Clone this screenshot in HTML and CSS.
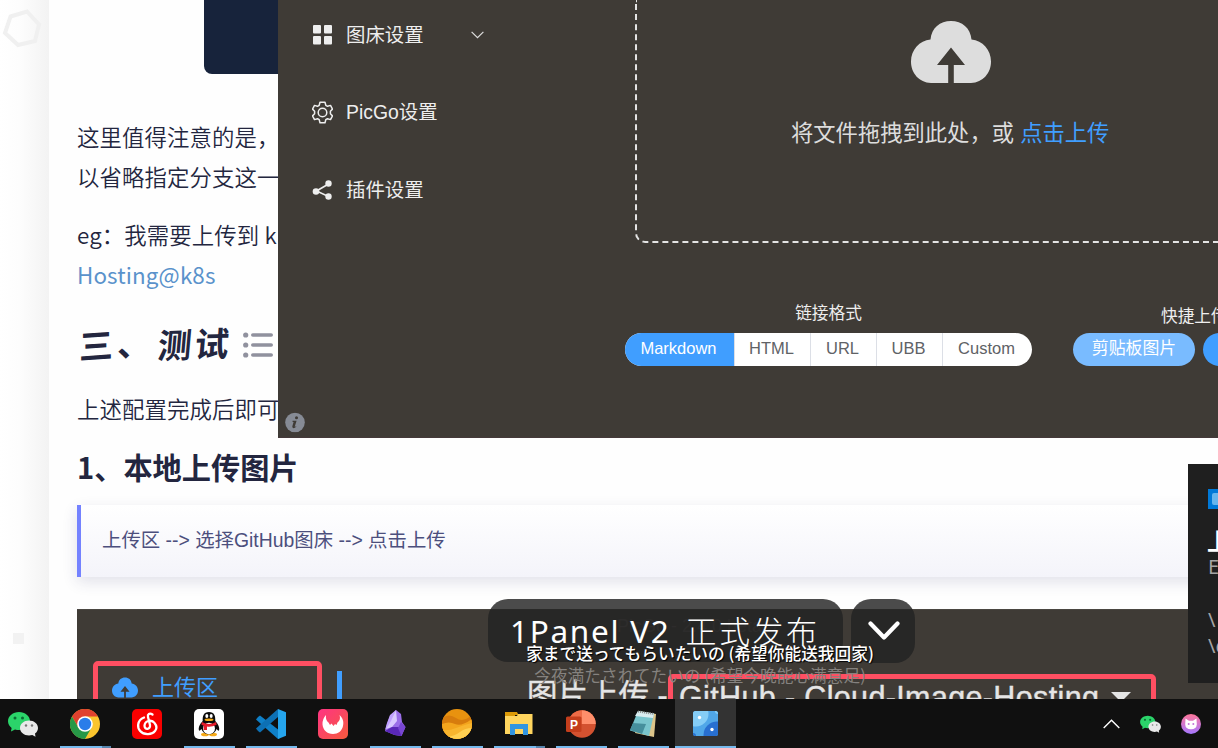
FILE: index.html
```html
<!DOCTYPE html>
<html lang="zh-CN">
<head>
<meta charset="utf-8">
<title>PicGo</title>
<link rel="stylesheet" href="styles.css">
</head>
<body>
<svg width="0" height="0" class="defs">
  <symbol id="cloud" viewBox="0 0 80 62"><path fill-rule="evenodd" d="M19.500 18.500C20.500 7 29 0 40 0s19.500 7 20.500 18.500C71.500 19.500 80 29 80 40.500 80 52 72 61.500 60 62H42.800V44H54L40 26.500 26 44H37.200V62H20C8 61.500 0 52 0 40.500 0 29 8.500 19.500 19.500 18.500Z" fill="currentColor"/></symbol>
  <symbol id="wechat" viewBox="0 0 30 26">
    <path d="M11 1C5 1 0 5 0 10.200c0 2.800 1.500 5 3.600 6.700L3 20.500l4-2c1.300.4 2.700.6 4 .6 6 0 11-4 11-9S17 1 11 1Z" fill="#2bd46a"/>
    <circle cx="7" cy="7" r="1.500" fill="#0a6b35"/><circle cx="14.500" cy="7" r="1.500" fill="#0a6b35"/>
    <path d="M21 9.500c-5 0-9 3.300-9 7.500s4 7.500 9 7.500c1.200 0 2.300-.2 3.300-.5L27.500 25.700 27 22.600c1.900-1.400 3-3.400 3-5.600 0-4.200-4-7.500-9-7.500Z" fill="#e9e9e9"/>
    <circle cx="18" cy="14.500" r="1.200" fill="#777"/><circle cx="24" cy="14.500" r="1.200" fill="#777"/>
  </symbol>
</svg>
<div class="desktop">

  <div class="page">
    <aside class="gutter">
      <svg class="hexagon" width="42" height="42" viewBox="0 0 42 42"><path d="M9.500 15.500 26 10.500 38 23.500 34 40 17 44 4 32Z" transform="translate(1 -6)" fill="none" stroke="#f0f0f0" stroke-width="4"/></svg>
      <div class="speck"></div>
    </aside>
    <main class="article">
      <div class="codeblock"></div>
      <p class="para">这里值得注意的是，<br>以省略指定分支这一</p>
      <p class="para">eg：我需要上传到 k<br><a class="link">Hosting@k8s</a></p>
      <h2 class="brush"><span class="brush-a">三、</span><span class="brush-b">测试</span>
        <svg width="31" height="26" viewBox="0 0 31 26"><g fill="#90919e"><circle cx="2.700" cy="3" r="2.600"/><circle cx="2.700" cy="13" r="2.600"/><circle cx="2.700" cy="23" r="2.600"/><rect x="8" y="1.200" width="22" height="3.600" rx="1.800"/><rect x="8" y="11.200" width="22" height="3.600" rx="1.800"/><rect x="8" y="21.200" width="22" height="3.600" rx="1.800"/></g></svg>
      </h2>
      <p class="para">上述配置完成后即可</p>
      <h3 class="subtitle">1、本地上传图片</h3>
      <blockquote class="quote">上传区 --&gt; 选择GitHub图床 --&gt; 点击上传</blockquote>
      <div class="shot">
        <div class="shot-nav"><svg width="26" height="21"><use href="#cloud"/></svg>上传区</div>
        <div class="shot-bar"></div>
        <div class="shot-main">
          <div class="shot-name">PicGo - 2.4.0.beta.9</div>
          <div class="shot-head"><span class="shot-label">图片上传 -</span><span class="shot-pick">GitHub - Cloud-Image-Hosting <i class="caret"></i></span></div>
        </div>
      </div>
    </main>
  </div>

  <section class="picgo">
    <nav class="menu">
      <div class="menu-item"><svg width="21" height="20" viewBox="0 0 21 20" fill="#eee"><rect x="1" y="0" width="8" height="8.500" rx="1"/><rect x="12" y="0" width="8" height="8.500" rx="1"/><rect x="1" y="11" width="8" height="8.500" rx="1"/><rect x="12" y="11" width="8" height="8.500" rx="1"/></svg><span>图床设置</span><svg class="chev" width="13" height="8" viewBox="0 0 13 8"><path d="M.6.8 6.500 6.700 12.400.8" fill="none" stroke="#ddd" stroke-width="1.200"/></svg></div>
      <div class="menu-item"><svg width="21" height="23" viewBox="0 0 21 23" fill="none" stroke="#eee" stroke-width="1.500" stroke-linejoin="round"><path d="M8 1.200h5l.8 3.100 1.700 1 3-.9 2 3.700-2.100 2.200v2.400l2.100 2.200-2 3.700-3-.9-1.700 1-.8 3.100H8l-.8-3.100-1.700-1-3 .9-2-3.700 2.100-2.200v-2.400L.5 8.100l2-3.700 3 .9 1.700-1Z"/><circle cx="10.500" cy="11.500" r="4.300"/></svg><span>PicGo设置</span></div>
      <div class="menu-item"><svg width="21" height="20" viewBox="0 0 21 20"><path d="M16.500 4 4.500 11l12 5.500" fill="none" stroke="#eee" stroke-width="1.600"/><g fill="#eee"><circle cx="16.500" cy="3.500" r="3.200"/><circle cx="4" cy="11.500" r="3.300"/><circle cx="16.500" cy="16.500" r="3.200"/></g></svg><span>插件设置</span></div>
      <svg class="info" width="20" height="20" viewBox="0 0 20 20"><circle cx="10" cy="10" r="9.800" fill="#868b95"/><circle cx="11.500" cy="5.300" r="1.500" fill="#3f3b36"/><path d="M7.600 8.300h4L9.700 14.200q.7.200 2-.9-1.300 2.600-3.500 2.300-1.400-.4-.8-2.100l1.200-4-1.200-.3Z" fill="#3f3b36"/></svg>
    </nav>
    <div class="upload">
      <div class="drop">
        <svg class="drop-cloud" width="80" height="62"><use href="#cloud"/></svg>
        <div class="drop-text">将文件拖拽到此处，或 <em>点击上传</em></div>
      </div>
      <div class="controls">
        <div class="format">
          <div class="label">链接格式</div>
          <div class="group"><b class="b1 on">Markdown</b><b class="b2">HTML</b><b class="b3">URL</b><b class="b3">UBB</b><b class="b4">Custom</b></div>
        </div>
        <div class="quick">
          <div class="label quick-label">快捷上传</div>
          <div class="quick-row"><b class="clip">剪贴板图片</b><b class="urlbtn"></b></div>
        </div>
      </div>
    </div>
  </section>

  <div class="banner"><div class="banner-text">1Panel V2 <span class="banner-cjk">正式发布</span></div><div class="banner-btn"><svg width="32" height="20" viewBox="0 0 32 20"><path d="M2.500 2.500 16 16.500 29.500 2.500" fill="none" stroke="#fff" stroke-width="4.200" stroke-linecap="round" stroke-linejoin="round"/></svg></div></div>
  <div class="lyrics"><div class="now">家まで送ってもらいたいの (希望你能送我回家)</div><div class="next">今夜満たされてたいの (希望今晚能心满意足)</div></div>

  <div class="toast"><div class="toast-icon"><i></i></div><strong>上传成功</strong><p class="toast-line">E</p><p class="toast-path">\<br>\c</p></div>

  <footer class="taskbar">
    <div class="app"><svg width="30" height="26"><use href="#wechat"/></svg></div>
    <div class="app run more"><svg width="30" height="30" viewBox="-15 -15 30 30"><circle r="15" fill="#fbc52d"/><path d="M0-7.500H13A15 15 0 0 0-13-7.500L-6.500 3.700Z" fill="#e0412f"/><path d="M-13-7.500A15 15 0 0 0 0 15L6.500 3.700-6.500 3.700Z" fill="#279847"/><circle r="7.800" fill="#fff"/><circle r="6.200" fill="#2a7de9"/></svg></div>
    <div class="app"><svg width="30" height="30" viewBox="0 0 30 30"><rect width="30" height="30" rx="5" fill="#f90000"/><path d="M20.500 5.500c-3-2-5.200-.2-4.500 2.500l2 8c.7 5-5.800 5-5.500.7.300-5 7-6.600 10-2.800 5 6-1 11.600-7 11.300C9 25 5.500 20 6.200 15.500 6.700 12 9 9.500 12 8.500" fill="none" stroke="#fff" stroke-width="2.300" stroke-linecap="round"/></svg></div>
    <div class="app run"><svg width="30" height="30" viewBox="0 0 30 30"><rect width="30" height="30" rx="5" fill="#fff"/><ellipse cx="11" cy="25.500" rx="4" ry="1.800" fill="#f6a916"/><ellipse cx="19" cy="25.500" rx="4" ry="1.800" fill="#f6a916"/><path d="M15 3C9.500 3 8.500 7 8.700 12 6 15 4 18.500 5 21.500c.7.500 1.700-.5 2.500-1.500 2 7 13 7 15 0 .8 1 1.800 2 2.500 1.500 1-3-1-6.500-3.700-9.500C21.500 7 20.500 3 15 3Z" fill="#0b0b0b"/><ellipse cx="15" cy="19.500" rx="6" ry="5.700" fill="#fff"/><ellipse cx="12.800" cy="7" rx="1.500" ry="2" fill="#fff"/><ellipse cx="17.200" cy="7" rx="1.500" ry="2" fill="#fff"/><ellipse cx="15" cy="10.700" rx="4.500" ry="1.300" fill="#f6a916"/><path d="M8 13q7 4 14 0l.7 2.700Q17 18.500 13 17.500v3.500H9.700v-4.300L7.300 15.500Z" fill="#e51c2c"/></svg></div>
    <div class="app run"><svg width="30" height="30" viewBox="0 0 30 30"><path d="m2 8 2-1.500L24 22v7L22 30 0 10.500Z" fill="#0f80c8"/><path d="M22 0v8L4 23.500 2 22 0 19.500Z" fill="#0d70b4"/><path d="m22 0 8 3.300v23.400L22 30Z" fill="#25a5ed"/></svg></div>
    <div class="app"><svg width="30" height="30" viewBox="0 0 30 30"><defs><linearGradient id="pk" x2="1" y2="1"><stop stop-color="#ff3484"/><stop offset="1" stop-color="#f45a3c"/></linearGradient></defs><rect width="30" height="30" rx="5" fill="url(#pk)"/><path d="M8 6C7.500 9.500 8.500 12 10.500 13.500L12 16l1.500-1.500L15.500 17l1.500-2 1.500 1 1-2.500C22 11.500 22.500 9 21.500 6 25 9 26 13 25 17 24 22 20 25 15 25 9 25 5 21 4.500 15.500Q4.200 10 8 6Z" fill="#fff"/></svg></div>
    <div class="app run"><svg width="30" height="30" viewBox="0 0 30 30"><path d="m16 1 5 4 1 8 3.500 5-4 9-7-1-9.500-4 2-7 3-8Z" fill="#9a6ee8"/><path d="m16 1-5 13-6 7 2-7 3-8Z" fill="#c0a1ff"/><path d="m16 1 1 11-5 6-6 2 5-8Z" fill="#d9c9ff"/><path d="m12 18 9 0 .5 9-7-1-9.500-4Z" fill="#5a28b8"/><path d="m21 13 4.500 5-4 9-3.500-8Z" fill="#7846d2"/></svg></div>
    <div class="app run"><svg width="30" height="30" viewBox="0 0 30 30"><clipPath id="pl"><circle cx="15" cy="15" r="15"/></clipPath><g clip-path="url(#pl)"><path fill="#e8920f" d="M0 0h30v30H0z"/><path d="M0 9q7-5 14 0t16-3v24H0Z" fill="#d77c0d"/><path d="M0 15q7-3 13 0t17-5v20H0Z" fill="#f3a51d"/><path d="M0 21q7 1 14-2t16-5v16H0Z" fill="#f8b52e"/><path d="M5 28q8-1 13-5t12-4v11H5Z" fill="#ffd052"/></g></svg></div>
    <div class="app run more"><svg width="28" height="24" viewBox="0 0 28 24"><path d="M0 0h12l1.500 3H10v3H0Z" fill="#dc9a08"/><path d="M13 2h14.500v20H0V4h12Z" fill="#ffd55e"/><path d="M5 23V12h18v11h-5v-6h-8v6Z" fill="#3295e0"/></svg></div>
    <div class="app run"><svg width="30" height="28" viewBox="0 0 30 28"><circle cx="16" cy="14" r="13.800" fill="#d35230"/><path d="M16 .2A13.800 13.800 0 0 1 29.800 14H16Z" fill="#ff8f6b"/><path d="M16 .2A13.800 13.800 0 0 0 2.500 11L16 14Z" fill="#ed6c47"/><rect x="0" y="6.500" width="15.500" height="15.500" rx="1.500" fill="#c43e1c"/><text x="4" y="18.500" class="ppt">P</text></svg></div>
    <div class="app run"><svg width="28" height="28" viewBox="0 0 28 28"><path d="m10 1 17 3-2 23-19-4Z" fill="#dcc489"/><path d="M9 1 25 3.500 20 26 1 20.500Z" fill="#79c5cd"/><path d="M9 1 25 3.500 24 8 6 6Z" fill="#d9edf0"/><path d="m4 13 13 1-4 10-12-4Z" fill="#468f9c"/><path d="M9 1.500 25 4" stroke="#888" stroke-width="2" stroke-dasharray="1 1"/></svg></div>
    <div class="app run active"><svg width="25" height="25" viewBox="0 0 25 25"><clipPath id="pg"><rect width="25" height="25" rx="2.500"/></clipPath><g clip-path="url(#pg)"><path fill="#50a7e8" d="M0 0h25v25H0z"/><circle cx="3" cy="3" r="12.500" fill="#85cdf6"/><circle cx="24" cy="24" r="13.500" fill="#286fd0"/><circle cx="25" cy="0" r="3" fill="#85cdf6"/><circle cx="0" cy="25" r="3" fill="#286fd0"/><circle cx="6.500" cy="6.500" r="1.700" fill="#fff"/><circle cx="19" cy="18.500" r="1.700" fill="#fff"/></g></svg></div>
    <div class="tray">
      <svg width="17" height="10" viewBox="0 0 17 10"><path d="M.7 9 8.500 1.200 16.300 9" fill="none" stroke="#fff" stroke-width="1.400"/></svg>
      <svg width="21" height="18"><use href="#wechat"/></svg>
      <svg width="20" height="20" viewBox="0 0 20 20"><defs><linearGradient id="ct" x2="0" y2="1"><stop stop-color="#ff779a"/><stop offset="1" stop-color="#a477ff"/></linearGradient></defs><circle cx="10" cy="10" r="10" fill="url(#ct)"/><path d="m4.500 4.500 3.500 2.300h4l3.500-2.300.3 6q-.3 4.700-5.800 4.700t-5.800-4.700Z" fill="#fff"/><circle cx="7.700" cy="10" r="1" fill="#c375d8"/><circle cx="12.300" cy="10" r="1" fill="#c375d8"/></svg>
    </div>
  </footer>
</div>
</body>
</html>
```
FILE: styles.css
```css
* { box-sizing: border-box; }
body { margin: 0; font-family: "Liberation Sans", "Noto Sans CJK SC", sans-serif; }
h2, h3, p, blockquote { margin: 0; }
b { font-weight: 400; }
svg { flex: none; display: block; }
.defs { position: absolute; }
.desktop { position: relative; width: 1218px; height: 748px; overflow: hidden; background: #fefefe; }

/* Blog page */
.page { display: flex; height: 699px; overflow: hidden; }
.gutter { width: 49px; flex: none; padding: 7px 0 0; background: linear-gradient(90deg, #fff 0, #fdfdfd 40%, #f3f3f3 100%); }
.speck { width: 11px; height: 11px; margin: 584px 0 0 13px; background: #f2f2f2; }
.article { flex: 1; min-width: 0; padding-left: 28px; color: #23263f; }
.codeblock { height: 74px; margin: 0 0 42px 127px; background: #17233b; border-radius: 0 0 8px 8px; }
.para { font: 350 22.4px/40px "Noto Sans CJK SC", sans-serif; letter-spacing: .12px; margin-bottom: 18px; white-space: nowrap; }
.link { color: #5a92cb; font-weight: 400; }
.brush { display: flex; align-items: center; height: 42px; margin: 30px 0 22px; font: 700 34px/42px "Noto Sans CJK SC", sans-serif; }
.brush-a { width: 81px; margin-top: -4px; padding-left: 2px; transform: skewY(-4deg); letter-spacing: 4px; white-space: nowrap; }
.brush-b { width: 85px; margin-top: -4px; transform: skew(-5deg, -2deg); letter-spacing: 3px; }
.subtitle { font: 700 29.2px/40px "Noto Sans CJK SC", sans-serif; }
.quote { height: 72px; margin: 19px 0 32px; padding-left: 21px; border-left: 4px solid #7482ff; background: linear-gradient(#fff, #f4f4fa); box-shadow: 0 5px 14px rgba(50, 50, 105, .14); color: #4c4f7d; font: 400 19.4px/70px "Liberation Sans", "Noto Sans CJK SC", sans-serif; }
.shot { display: flex; height: 90px; background: #3f3b36; border-top: 1px solid #4a4641; }
.shot-nav { display: flex; gap: 14px; width: 229px; height: 60px; margin: 51px 0 0 16px; padding: 11px 0 0 14px; border: 5px solid #ff4f62; border-radius: 5px; color: #409eff; font-size: 22px; line-height: 22px; white-space: nowrap; }
.shot-bar { width: 5px; margin: 61px 0 0 15px; background: #409eff; }
.shot-main { padding-left: 185px; color: #e5e5e5; white-space: nowrap; }
.shot-name { height: 64px; padding: 4px 0 0 90px; color: #5d5a56; font: 18px/24px "Liberation Sans", sans-serif; }
.shot-head { display: flex; font-size: 30.5px; line-height: 37px; -webkit-text-stroke: .4px #e5e5e5; }
.shot-label { width: 141px; padding-top: 3px; }
.shot-pick { display: flex; width: 488px; height: 60px; padding-left: 6px; border: 5px solid #ff4f62; border-radius: 5px; letter-spacing: .36px; }
.caret { margin: 13px 0 0 12px; height: 0; border: 10px solid transparent; border-top-color: #e5e5e5; }

/* PicGo window */
.picgo { position: absolute; left: 278px; top: 0; width: 940px; height: 438px; display: flex; overflow: hidden; background: #3f3b36; color: #eee; border-bottom: 1px solid #45393a; }
.menu { flex: none; width: 347px; padding: 15px 0 0 34px; font-size: 19.4px; }
.menu-item { display: flex; align-items: center; gap: 13px; height: 39px; margin-bottom: 38.500px; }
.menu-item span { margin-top: -3px; }
.chev { margin-left: 34px; }
.info { margin: 164.500px 0 0 -27px; transform: translateY(38.500px); }
.upload { flex: none; width: 650px; }
.drop { height: 243px; width: 630px; margin-left: 10px; padding-top: 21px; border: 2px dashed #e4e4e4; border-top: 0; border-radius: 0 0 10px 10px; color: #ddd; }
.drop-cloud { margin-left: 273.500px; }
.drop-text { margin: 35px 0 0 154px; font-size: 22.300px; line-height: 32px; white-space: nowrap; }
.drop-text em { font-style: normal; color: #409eff; }
.controls { display: flex; gap: 41px; padding-top: 61px; }
.label { height: 29px; font-size: 16.700px; line-height: 20px; text-align: center; white-space: nowrap; }
.group { display: flex; width: 407px; height: 33px; overflow: hidden; border-radius: 17px; background: #fff; color: #606266; font-size: 16.500px; line-height: 31px; text-align: center; }
.group b { border-left: 1px solid #dcdfe6; padding-right: 2px; }
.group .on { background: #409eff; color: #fff; border: 0; }
.b1 { width: 109px; }
.b2 { width: 76px; }
.b3 { width: 66px; }
.b4 { width: 90px; }
.quick-label { padding: 3px 0 0 88px; text-align: left; }
.quick-row { display: flex; gap: 8px; }
.clip { width: 122px; height: 33px; border-radius: 17px; background: #79bbff; color: #fff; font-size: 16.900px; line-height: 32px; text-align: center; }
.urlbtn { width: 90px; height: 33px; border-radius: 17px; background: #409eff; }

/* Floating overlays */
.banner { position: absolute; left: 488px; top: 599px; display: flex; gap: 8px; color: #fff; }
.banner-text { width: 355px; height: 63px; padding-left: 22px; border-radius: 20px; background: rgba(34, 34, 34, .815); font: 400 31.5px/63px "Noto Sans", "Noto Sans CJK SC", sans-serif; letter-spacing: 1.700px; white-space: nowrap; }
.banner-cjk { margin-left: 5px; font-size: 31px; font-weight: 300; letter-spacing: 2.500px; }
.banner-btn { width: 64px; height: 64px; padding-left: 1px; border-radius: 20px; background: rgba(34, 34, 34, .815); display: flex; align-items: center; justify-content: center; }
.lyrics { position: absolute; left: 500px; top: 642px; width: 400px; text-align: center; font: 500 16.700px/22px "Noto Sans CJK SC", sans-serif; white-space: nowrap; }
.now { color: #fff; text-shadow: 1px 1px 1px #000; }
.next { color: #85827f; font-weight: 400; }
.toast { position: absolute; left: 1188px; top: 464px; width: 30px; height: 219px; padding: 25px 0 0 20px; overflow: hidden; background: #1f1f1f; color: #a5a5a5; font: 20px/26px "Noto Sans", sans-serif; white-space: nowrap; }
.toast-icon { width: 20px; height: 20px; padding: 4px; background: #0078d7; }
.toast-icon i { display: block; width: 12px; height: 12px; border-radius: 2px; background: #67b5ed; }
.toast strong { display: block; margin: 17px 0 0 -1px; color: #fff; font: 700 23px/28px "Noto Sans CJK SC", sans-serif; }
.toast-line { padding-top: 2px; line-height: 22px; }
.toast-path { margin-top: 29px; }

/* Taskbar */
.taskbar { position: absolute; left: 0; right: 0; bottom: 0; height: 49px; display: flex; background: #101010; }
.app { flex: none; width: 51px; height: 49px; margin-right: 11px; display: flex; align-items: center; justify-content: center; border-bottom: 2px solid transparent; padding: 2px 1px 0 0; }
.app:first-child { margin-left: -2px; }
.run { border-bottom-color: #76b9ed; }
.more { border-image: linear-gradient(90deg, #76b9ed 80%, #5785ad 80%) 2; border-width: 0 0 2px; border-style: solid; }
.active { width: 61px; margin: 0 0 0 -5px; background: #333; }
.ppt { font: 700 12px "Liberation Sans", sans-serif; fill: #fff; }
.tray { display: flex; align-items: center; gap: 20px; margin-left: auto; padding-right: 17px; }
```
